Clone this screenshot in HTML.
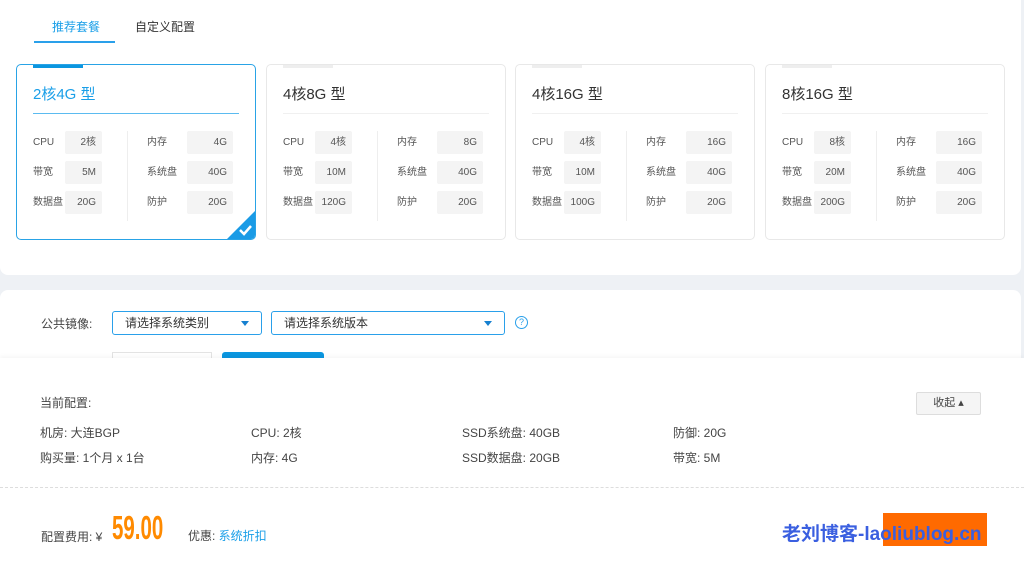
<!DOCTYPE html>
<html><head><meta charset="utf-8"><style>
*{margin:0;padding:0;box-sizing:border-box}
body{width:1024px;height:564px;overflow:hidden;background:#eef1f5;font-family:"Liberation Sans","Noto Sans CJK SC",sans-serif;color:#333;font-size:12px;position:relative}
.top{position:absolute;left:0;top:0;width:1021px;height:275px;background:#fff;border-radius:0 0 8px 8px}
.tab{position:absolute;top:18px;font-size:12px}
.card{position:absolute;top:64px;width:240px;height:176px;border:1px solid #e8e8e8;border-radius:5px;background:#fff;overflow:hidden}
.card.sel{border-color:#29a3e6}
.card .bar{position:absolute;left:16px;top:0;width:50px;height:3px;background:#eee}
.card.sel .bar{background:#0b96e0}
.card h3{position:absolute;left:16px;top:18px;font-size:15px;font-weight:normal;color:#333}
.card.sel h3{color:#1a9fe8}
.card .ul{position:absolute;left:16px;top:48px;width:206px;height:1px;background:#f0f0f0}
.card.sel .ul{background:#5bbbf0}
.lb{position:absolute;font-size:10px;color:#555;line-height:12px}
.vb{position:absolute;height:23px;background:#f4f4f4;border-radius:2px;font-size:10px;color:#555;text-align:right;padding:6px 6px 0 0;line-height:12px}
.dv{position:absolute;left:110px;top:66px;width:1px;height:90px;background:#eee}
.mid{position:absolute;left:0;top:290px;width:1021px;height:80px;background:#fff;border-radius:8px 8px 0 0}
.dd{position:absolute;top:311px;height:24px;border:1px solid #2aa0ea;border-radius:3px;font-size:12px;line-height:22px;padding-left:12px;color:#333}
.dd i{position:absolute;right:12px;top:9px;border-left:4px solid transparent;border-right:4px solid transparent;border-top:5px solid #1680d0}
.bot{position:absolute;left:0;top:358px;width:1024px;height:206px;background:#fff;box-shadow:0 -2px 4px rgba(0,0,0,.04)}
.t{position:absolute;font-size:12px;color:#444}
</style></head><body>
<div class="top">
<div class="tab" style="left:52px;color:#1a9fe8">推荐套餐</div>
<div style="position:absolute;left:34px;top:41px;width:81px;height:2px;background:#2aa0ea"></div>
<div class="tab" style="left:135px;color:#333">自定义配置</div>
</div>

<div class="card sel" style="left:16px">
<div class="bar"></div><h3>2核4G 型</h3><div class="ul"></div>
<div class="lb" style="left:16px;top:72px">CPU</div><div class="vb" style="left:48px;top:66px;width:37px">2核</div>
<div class="lb" style="left:16px;top:102px">带宽</div><div class="vb" style="left:48px;top:96px;width:37px">5M</div>
<div class="lb" style="left:16px;top:132px">数据盘</div><div class="vb" style="left:48px;top:126px;width:37px">20G</div>
<div class="dv"></div>
<div class="lb" style="left:130px;top:72px">内存</div><div class="vb" style="left:170px;top:66px;width:46px">4G</div>
<div class="lb" style="left:130px;top:102px">系统盘</div><div class="vb" style="left:170px;top:96px;width:46px">40G</div>
<div class="lb" style="left:130px;top:132px">防护</div><div class="vb" style="left:170px;top:126px;width:46px">20G</div>
<svg style="position:absolute;right:0;bottom:0" width="28" height="28"><path d="M28 0V28H0Z" fill="#1a9be6"/><path d="M13 19l4 4 7-8" stroke="#fff" stroke-width="2.5" fill="none"/></svg>
</div>
<div class="card" style="left:266px">
<div class="bar"></div><h3>4核8G 型</h3><div class="ul"></div>
<div class="lb" style="left:16px;top:72px">CPU</div><div class="vb" style="left:48px;top:66px;width:37px">4核</div>
<div class="lb" style="left:16px;top:102px">带宽</div><div class="vb" style="left:48px;top:96px;width:37px">10M</div>
<div class="lb" style="left:16px;top:132px">数据盘</div><div class="vb" style="left:48px;top:126px;width:37px">120G</div>
<div class="dv"></div>
<div class="lb" style="left:130px;top:72px">内存</div><div class="vb" style="left:170px;top:66px;width:46px">8G</div>
<div class="lb" style="left:130px;top:102px">系统盘</div><div class="vb" style="left:170px;top:96px;width:46px">40G</div>
<div class="lb" style="left:130px;top:132px">防护</div><div class="vb" style="left:170px;top:126px;width:46px">20G</div>
</div>
<div class="card" style="left:515px">
<div class="bar"></div><h3>4核16G 型</h3><div class="ul"></div>
<div class="lb" style="left:16px;top:72px">CPU</div><div class="vb" style="left:48px;top:66px;width:37px">4核</div>
<div class="lb" style="left:16px;top:102px">带宽</div><div class="vb" style="left:48px;top:96px;width:37px">10M</div>
<div class="lb" style="left:16px;top:132px">数据盘</div><div class="vb" style="left:48px;top:126px;width:37px">100G</div>
<div class="dv"></div>
<div class="lb" style="left:130px;top:72px">内存</div><div class="vb" style="left:170px;top:66px;width:46px">16G</div>
<div class="lb" style="left:130px;top:102px">系统盘</div><div class="vb" style="left:170px;top:96px;width:46px">40G</div>
<div class="lb" style="left:130px;top:132px">防护</div><div class="vb" style="left:170px;top:126px;width:46px">20G</div>
</div>
<div class="card" style="left:765px">
<div class="bar"></div><h3>8核16G 型</h3><div class="ul"></div>
<div class="lb" style="left:16px;top:72px">CPU</div><div class="vb" style="left:48px;top:66px;width:37px">8核</div>
<div class="lb" style="left:16px;top:102px">带宽</div><div class="vb" style="left:48px;top:96px;width:37px">20M</div>
<div class="lb" style="left:16px;top:132px">数据盘</div><div class="vb" style="left:48px;top:126px;width:37px">200G</div>
<div class="dv"></div>
<div class="lb" style="left:130px;top:72px">内存</div><div class="vb" style="left:170px;top:66px;width:46px">16G</div>
<div class="lb" style="left:130px;top:102px">系统盘</div><div class="vb" style="left:170px;top:96px;width:46px">40G</div>
<div class="lb" style="left:130px;top:132px">防护</div><div class="vb" style="left:170px;top:126px;width:46px">20G</div>
</div>

<div class="mid"></div>
<div class="t" style="left:41px;top:315px">公共镜像:</div>
<div class="dd" style="left:112px;width:150px">请选择系统类别<i></i></div>
<div class="dd" style="left:271px;width:234px">请选择系统版本<i></i></div>
<div style="position:absolute;left:515px;top:316px;width:13px;height:13px;border:1px solid #2aa0ea;border-radius:50%;color:#2aa0ea;font-size:9px;text-align:center;line-height:11px">?</div>
<div style="position:absolute;left:112px;top:352px;width:100px;height:10px;border:1px solid #e3e3e3;border-bottom:none"></div>
<div style="position:absolute;left:222px;top:352px;width:102px;height:10px;background:#0b96e0;border-radius:3px 3px 0 0"></div>

<div class="bot">
<div class="t" style="left:40px;top:36px">当前配置:</div>
<div style="position:absolute;left:916px;top:34px;width:65px;height:23px;border:1px solid #ddd;background:#f5f5f5;border-radius:2px;font-size:11px;line-height:21px;text-align:center;color:#444">收起 ▴</div>
<div class="t" style="left:40px;top:66px">机房: 大连BGP</div>
<div class="t" style="left:251px;top:66px">CPU: 2核</div>
<div class="t" style="left:462px;top:66px">SSD系统盘: 40GB</div>
<div class="t" style="left:673px;top:66px">防御: 20G</div>
<div class="t" style="left:40px;top:91px">购买量: 1个月 x 1台</div>
<div class="t" style="left:251px;top:91px">内存: 4G</div>
<div class="t" style="left:462px;top:91px">SSD数据盘: 20GB</div>
<div class="t" style="left:673px;top:91px">带宽: 5M</div>
<div style="position:absolute;left:0;top:129px;width:1024px;border-top:1px dashed #ddd"></div>
<div class="t" style="left:41px;top:170px">配置费用: ¥</div>
<div style="position:absolute;left:112px;top:152px;font-size:33px;line-height:36px;font-weight:bold;color:#ff8a00;transform:scaleX(0.62);transform-origin:left top">59.00</div>
<div class="t" style="left:188px;top:169px">优惠: <span style="color:#1a9fe8">系统折扣</span></div>
<div style="position:absolute;left:883px;top:155px;width:104px;height:33px;background:#ff6a00"></div>
<div style="position:absolute;left:782px;top:161px;font-size:19px;font-weight:bold;color:#3a5fe0">老刘博客-laoliublog.cn</div>
</div>
</body></html>
